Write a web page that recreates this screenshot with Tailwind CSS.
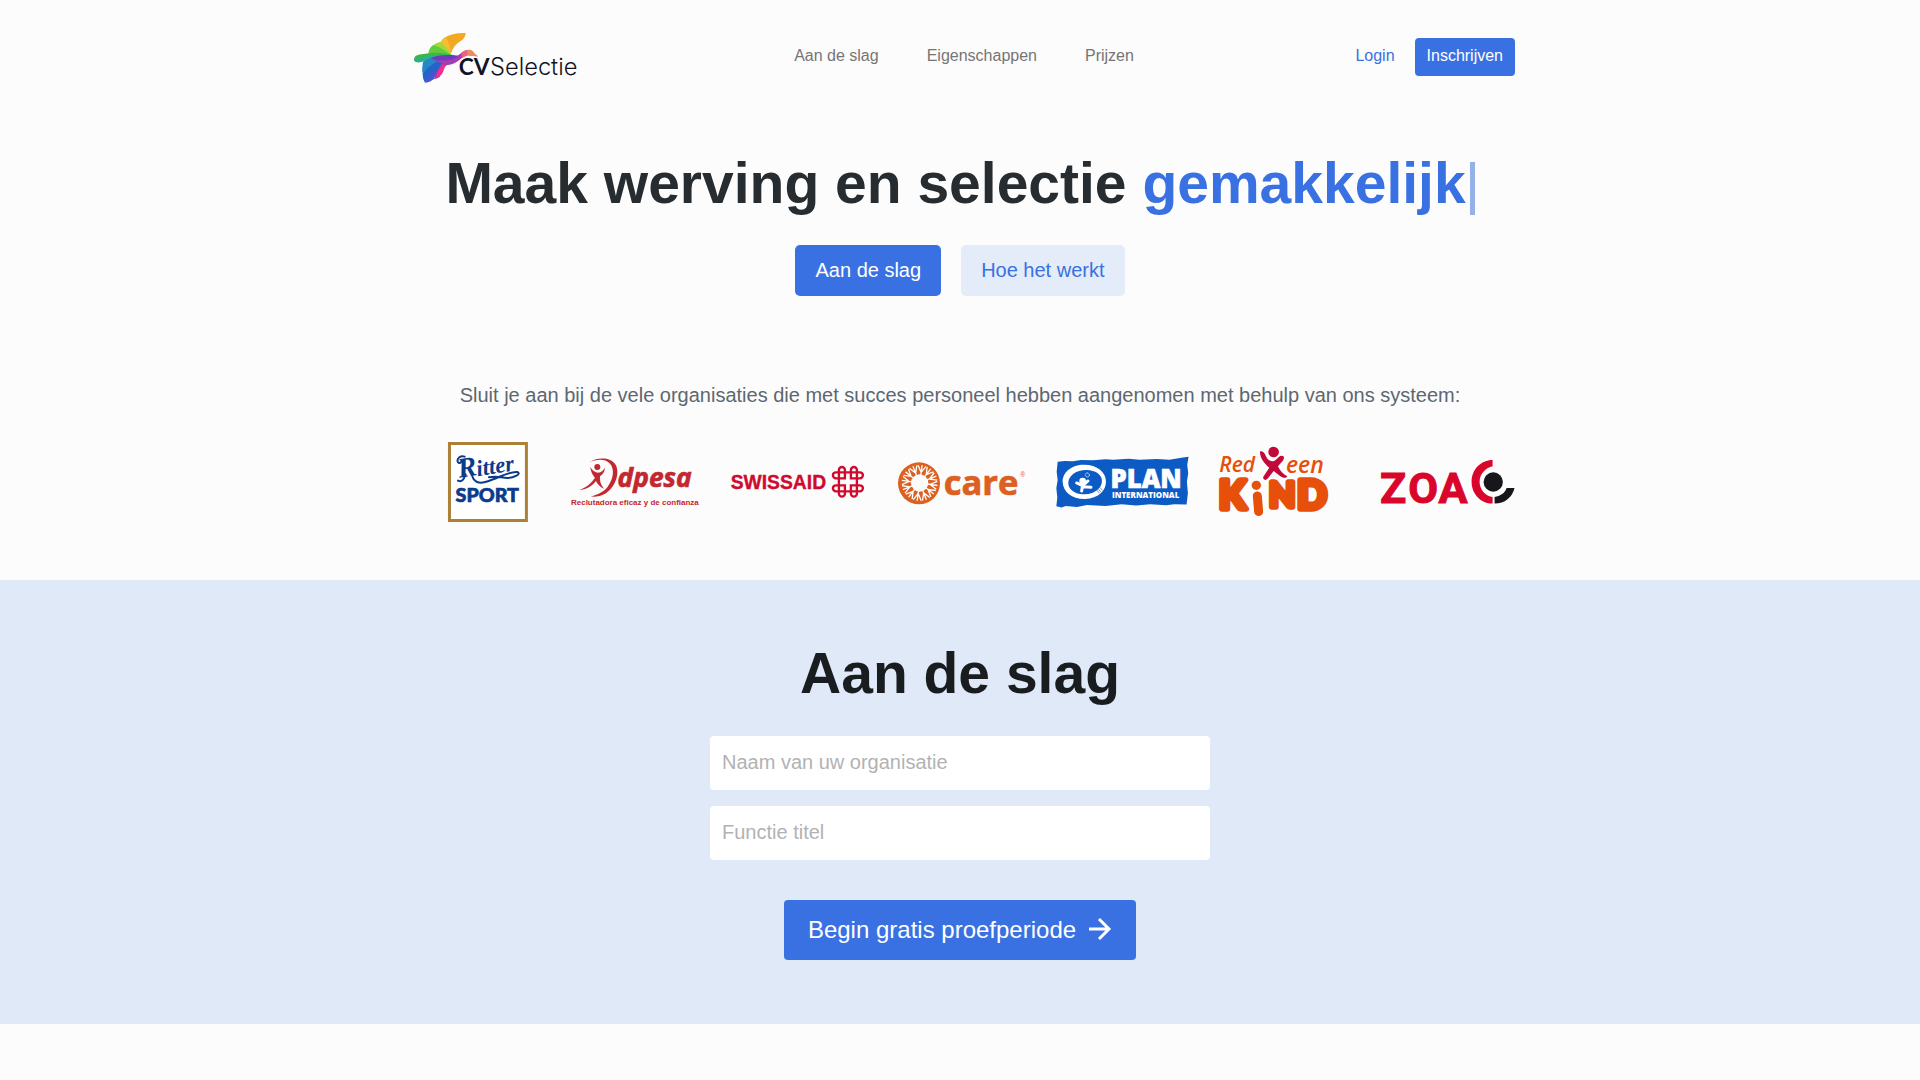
<!DOCTYPE html>
<html lang="nl">
    <head>
        <meta charset="utf-8">
        <meta name="viewport" content="width=device-width, initial-scale=1">
        <title>CVSelectie</title>
        <script src="https://cdn.jsdelivr.net/npm/@tailwindcss/browser@4"></script>
    </head>
    <body class="min-h-screen bg-[#fcfcfc] font-['Liberation_Sans',Arial,sans-serif]">

        <header class="max-w-[1140px] mx-auto px-[15px] pt-8">
            <nav class="flex items-start justify-between">
                <a href="#" aria-label="CVSelectie" class="block flex-1 pl-2">
                    <svg viewBox="36 33 495 156" class="w-[165px] h-[52px]">
                        <path fill="#f2a823" d="M194 36C174 35 150 38 134 48C124 54 120 61 116 70L149 99C156 80 164 70 178 61C190 54 193 46 194 36Z"/>
                        <path fill="#f7bd36" d="M134 48C124 54 120 61 116 70L149 99C149 78 144 62 134 48Z"/>
                        <path fill="#a5d83a" d="M119 62C108 64 99 68 93 78L150 102C142 86 132 73 119 62Z"/>
                        <path fill="#63cc3c" d="M97 72C88 78 84 86 82 96L150 102C134 88 116 78 97 72Z"/>
                        <path fill="#38b84a" d="M39 117C39 105 48 102 62 100C92 93 126 93 160 103C130 108 97 112 68 119C56 124 42 126 39 117Z"/>
                        <path fill="#2daf8b" d="M39 117C64 104 110 99 160 103L146 112C110 108 84 116 64 122C54 125 42 126 39 117Z"/>
                        <path fill="#2387c8" d="M160 103C125 103 90 109 66 122C64 138 62 148 65 157C88 135 125 113 160 103Z"/>
                        <path fill="#2463c9" d="M160 103C120 110 84 134 65 157C65 169 67 177 72 185C98 154 125 124 160 103Z"/>
                        <path fill="#4853cc" d="M160 103C122 127 90 154 72 185C82 186 91 179 99 174C105 151 128 128 160 103Z"/>
                        <path fill="#7943c0" d="M166 104C132 118 105 143 99 174C105 174 109 172 116 168C120 145 135 129 166 104Z"/>
                        <path fill="#ef2f8e" d="M150 112C122 124 110 145 104 171C114 170 122 163 126 153C131 141 131 134 144 129Z"/>
                        <path fill="#6c3cba" d="M88 112C110 101 135 101 159 103C177 105 178 98 190 92L188 106C170 111 162 130 139 131C120 132 110 116 88 112Z"/>
                        <path fill="#a63bb7" d="M96 119C126 116 153 123 172 104C181 95 190 87 204 87C192 97 189 108 175 117C157 132 138 136 120 125Z"/>
                        <path fill="#e8647f" d="M181 96C187 88 197 86 205 87L218 104C203 101 194 106 183 111Z"/>
                        <path fill="#f18b5c" d="M199 87C211 84 218 91 220 97C225 100 229 104 231 107C219 105 210 107 202 103C198 100 198 93 199 87Z"/>
                        <text x="173" y="162" font-family="Lato" font-weight="700" font-size="68" fill="#111325">CV</text>
                        <text x="267" y="162" font-family="Inter" font-weight="300" font-size="71" fill="#111325">Selectie</text>
                    </svg>
                </a>
                <div class="flex gap-12 pt-3 text-base text-[#757575]">
                    <a href="#start">Aan de slag</a>
                    <a href="#eigenschappen">Eigenschappen</a>
                    <a href="#prijzen">Prijzen</a>
                </div>
                <div class="flex flex-1 justify-end pt-[6px]">
                    <a href="#login" class="px-5 py-[6px] text-[#3971e3]">Login</a>
                    <a href="#inschrijven" class="h-[38px] px-3 py-[6px] rounded bg-[#3971e3] text-white">Inschrijven</a>
                </div>
            </nav>
        </header>

        <main>
            <section class="max-w-[1140px] mx-auto px-[15px] pt-[67px] pb-[58px] text-center">
                <h1 class="flex justify-center text-[57px] leading-[64px] font-bold text-[#272c30]">
                    <span>Maak werving en selectie <span class="text-[#3971e3]">gemakkelijk</span></span>
                    <span class="w-[5px] h-[53px] mt-[11px] ml-1 bg-[#94b1e8]"></span>
                </h1>

                <div class="flex justify-center gap-5 pt-[30px] text-xl">
                    <a href="#start" class="h-[51px] px-5 rounded-[5px] bg-[#3971e3] leading-[50px] text-white">Aan de slag</a>
                    <a href="#werking" class="h-[51px] px-5 rounded-[5px] bg-[#e4ebf9] leading-[50px] text-[#3971e3]">Hoe het werkt</a>
                </div>

                <p class="pt-[85px] text-xl leading-[28px] text-[#5d6771]">Sluit je aan bij de vele organisaties die met succes personeel hebben aangenomen met behulp van ons systeem:</p>

                <div class="grid grid-cols-7 gap-7 pt-[33px]">

                    <svg viewBox="-75 51 404 240" class="w-full" role="img" aria-label="Ritter Sport">
                        <path fill="#fff" stroke="#ab8138" stroke-width="9" d="M58.500 55.500H289.500V286.500H58.500Z"/>
                        <text x="88" y="158" font-family="Liberation Serif" font-style="italic" font-weight="700" font-size="84" fill="#0b3b8c" transform="rotate(-9 88 158)">R</text>
                        <text x="143" y="154" font-family="Liberation Serif" font-style="italic" font-weight="700" font-size="68" fill="#0b3b8c" transform="rotate(-9 143 154)">itter</text>
                        <path fill="none" stroke="#0b3b8c" stroke-width="6" stroke-linecap="round" d="M104 95C92 91 81 99 83 109C86 118 97 113 94 105M84 167C98 174 103 158 107 148M125 143C128 174 149 178 174 169C209 157 240 138 262 141C276 147 252 159 233 159C213 159 204 151 177 157"/>
                        <text x="77" y="230" font-family="Lato" font-weight="900" font-size="59" fill="#0b3b8c" stroke="#0b3b8c" stroke-width="2">SPORT</text>
                    </svg>

                    <svg viewBox="413 51 404 240" class="w-full" role="img" aria-label="Adpesa">
                        <g fill="#c3272f">
                            <path d="M474 113C499 96 540 94 556 119C571 148 552 190 524 206C511 213 493 217 482 214C504 208 518 201 530 188C550 163 554 132 538 115C524 101 499 102 474 113Z"/>
                            <circle cx="501" cy="126" r="9"/>
                            <path d="M480 126C486 137 496 143 503 143C513 142 519 137 523 128C524 142 516 148 509 154C507 167 512 180 521 191C509 186 501 177 497 168C484 184 466 195 447 195C468 188 484 173 494 158C488 151 482 143 480 126Z"/>
                            <text x="562" y="185" font-family="Open Sans" font-style="italic" font-weight="700" font-size="79" stroke="#c3272f" stroke-width="2">dpesa</text>
                            <text x="422" y="240" font-family="Liberation Sans" font-weight="700" font-size="24">Reclutadora eficaz y de confianza</text>
                        </g>
                    </svg>

                    <svg viewBox="30 51 404 240" class="w-full" role="img" aria-label="Swissaid">
                        <text x="32" y="192" font-family="Liberation Sans" font-weight="700" font-size="58" fill="#cf0a2c" stroke="#cf0a2c">SWISSAID</text>
                        <g fill="none" stroke="#cf0a2c" stroke-width="7">
                            <path d="M384 142H348a9 9 0 0 0 0 18H375V135a9 9 0 0 0-18 0V171"/>
                            <path d="M384 142H348a9 9 0 0 0 0 18H375V135a9 9 0 0 0-18 0V171" transform="matrix(-1 0 0 1 768 0)"/>
                            <path d="M384 142H348a9 9 0 0 0 0 18H375V135a9 9 0 0 0-18 0V171" transform="matrix(1 0 0 -1 0 341)"/>
                            <path d="M384 142H348a9 9 0 0 0 0 18H375V135a9 9 0 0 0-18 0V171" transform="matrix(-1 0 0 -1 768 341)"/>
                        </g>
                    </svg>

                    <svg viewBox="518 51 404 240" class="w-full" role="img" aria-label="Care">
                        <circle cx="596" cy="175" r="63" fill="#dc601f"/>
                        <circle cx="598" cy="174" r="26" fill="#fcfcfc"/>
                        <g id="stralen" fill="none" stroke="#fcfcfc" stroke-width="4"></g>
                        <text x="670" y="211" font-family="Open Sans" font-weight="700" font-size="104" fill="#dc601f" stroke="#dc601f" stroke-width="2">care</text>
                        <text x="900" y="155" font-family="Liberation Sans" font-size="20" fill="#dc601f">®</text>
                    </svg>

                    <svg viewBox="46 51 404 240" class="w-full" role="img" aria-label="Plan International">
                        <path fill="#0c5bc4" d="M54 110L75 108L99 109L124 105L160 106L197 103L221 104L267 101L300 104L352 102L390 104L425 98L447 95L443 120L446 145L442 170L445 205L441 239L404 238L380 241L332 238L290 242L246 238L198 243L142 240L112 246L78 243L66 248L50 244L53 218L50 190L54 165L51 140Z"/>
                        <path fill="#fff" fill-rule="evenodd" d="M69 171C68 142 96 119 133 119C174 119 199 142 199 169C200 198 175 221 137 222C98 223 70 201 69 171ZM86 172C84 194 108 210 136 208C163 207 187 190 187 168C187 148 166 136 142 135C111 134 88 151 86 172Z"/>
                        <circle cx="129" cy="168" r="10" fill="#fff"/>
                        <circle cx="143" cy="150" r="6" fill="none" stroke="#fff" stroke-width="3" stroke-dasharray="3 2"/>
                        <path fill="none" stroke="#fff" stroke-width="9" stroke-linecap="round" stroke-linejoin="round" d="M111 174L129 182L145 168M129 180L126 198M130 185L154 187"/>
                        <path fill="none" stroke="#0c5bc4" stroke-width="2" d="M166 190L180 205M171 187L184 201M177 184L189 196"/>
                        <text x="213" y="188" font-family="Open Sans" font-weight="800" font-size="77" fill="#fff" stroke="#fff" stroke-width="2">PLAN</text>
                        <text x="217" y="219" font-family="Open Sans" font-weight="800" font-size="24" fill="#fff">INTERNATIONAL</text>
                    </svg>

                    <svg viewBox="534 51 404 240" class="w-full" role="img" aria-label="Red een Kind">
                        <g fill="#e6500b">
                            <text x="538" y="141" font-family="Open Sans" font-style="italic" font-weight="600" font-size="63">Red</text>
                            <text x="738" y="143" font-family="Open Sans" font-style="italic" font-weight="600" font-size="69">een</text>
                            <g font-family="Lato" font-weight="900" stroke="#e6500b" stroke-width="16" stroke-linejoin="round">
                                <text x="536" y="252" font-size="118">K</text>
                                <text x="687" y="245" font-size="102">N</text>
                                <text x="771" y="251" font-size="118">D</text>
                            </g>
                            <circle cx="649" cy="181" r="14"/>
                            <path fill="none" stroke="#e6500b" stroke-width="27" stroke-linecap="round" d="M652 213L656 260"/>
                        </g>
                        <circle cx="701" cy="81" r="16" fill="#c3093b"/>
                        <path fill="#c3093b" d="M660 80C669 76 675 86 678 94C682 104 690 110 699 109C709 107 715 93 724 92C734 91 734 101 728 108L714 124C720 137 730 149 742 154C738 161 728 159 721 154L701 138L687 156C684 160 682 164 676 165C668 163 668 157 673 151L688 128C674 117 659 97 660 80Z"/>
                    </svg>

                    <svg viewBox="121 51 404 240" class="w-full" role="img" aria-label="ZOA">
                        <g font-family="Roboto" font-weight="700" font-size="130" fill="#d9052b" stroke="#d9052b" stroke-width="3">
                            <text x="121" y="235">Z</text>
                            <text x="206" y="235">O</text>
                            <text x="297" y="235">A</text>
                        </g>
                        <path fill="#d9052b" d="M459 105V124C440 127 420 147 420 170C420 195 439 213 459 216V236C424 236 396 207 396 170C396 134 424 105 459 105Z"/>
                        <circle cx="461" cy="171" r="29" fill="#17171b"/>
                        <path fill="#17171b" d="M465 236V216C482 213 496 205 501 189H525C518 217 496 236 465 236Z"/>
                    </svg>

                </div>
            </section>

            <section id="start" class="px-4 pt-[61px] pb-16 bg-[#dfe9f8]">
                <h2 class="text-center text-[57px] leading-[64px] font-bold text-[#191d20]">Aan de slag</h2>
                <form class="flex flex-col items-center pt-[31px]">
                    <div class="flex flex-col gap-4 w-full max-w-[500px]">
                        <input type="text" aria-label="Naam van uw organisatie" placeholder="Naam van uw organisatie" class="w-full h-[54px] px-3 rounded bg-white text-xl text-gray-800 placeholder:text-[#b2b2b2]">
                        <input type="text" aria-label="Functie titel" placeholder="Functie titel" class="w-full h-[54px] px-3 rounded bg-white text-xl text-gray-800 placeholder:text-[#b2b2b2]">
                    </div>
                    <button type="submit" class="flex items-center gap-3 h-[60px] mt-10 px-6 rounded bg-[#3971e3] text-2xl text-white">
                        Begin gratis proefperiode
                        <svg viewBox="0 0 24 24" class="w-6 h-6" fill="none" stroke="currentColor" stroke-width="3"><path d="M1 11H20M11 1L21 11L11 21"/></svg>
                    </button>
                </form>
            </section>
        </main>

        <script>
            // rays of the care emblem
            var stralen = ""
            for (var i = 0; i < 12; i++) {
                stralen += `<path d="M598 152V120M598 142L586 122M598 142L610 122" stroke-linejoin="bevel" transform="rotate(${i * 30 + 8} 598 174)"/>`
            }
            document.getElementById("stralen").innerHTML = stralen
        </script>

    </body>
</html>
